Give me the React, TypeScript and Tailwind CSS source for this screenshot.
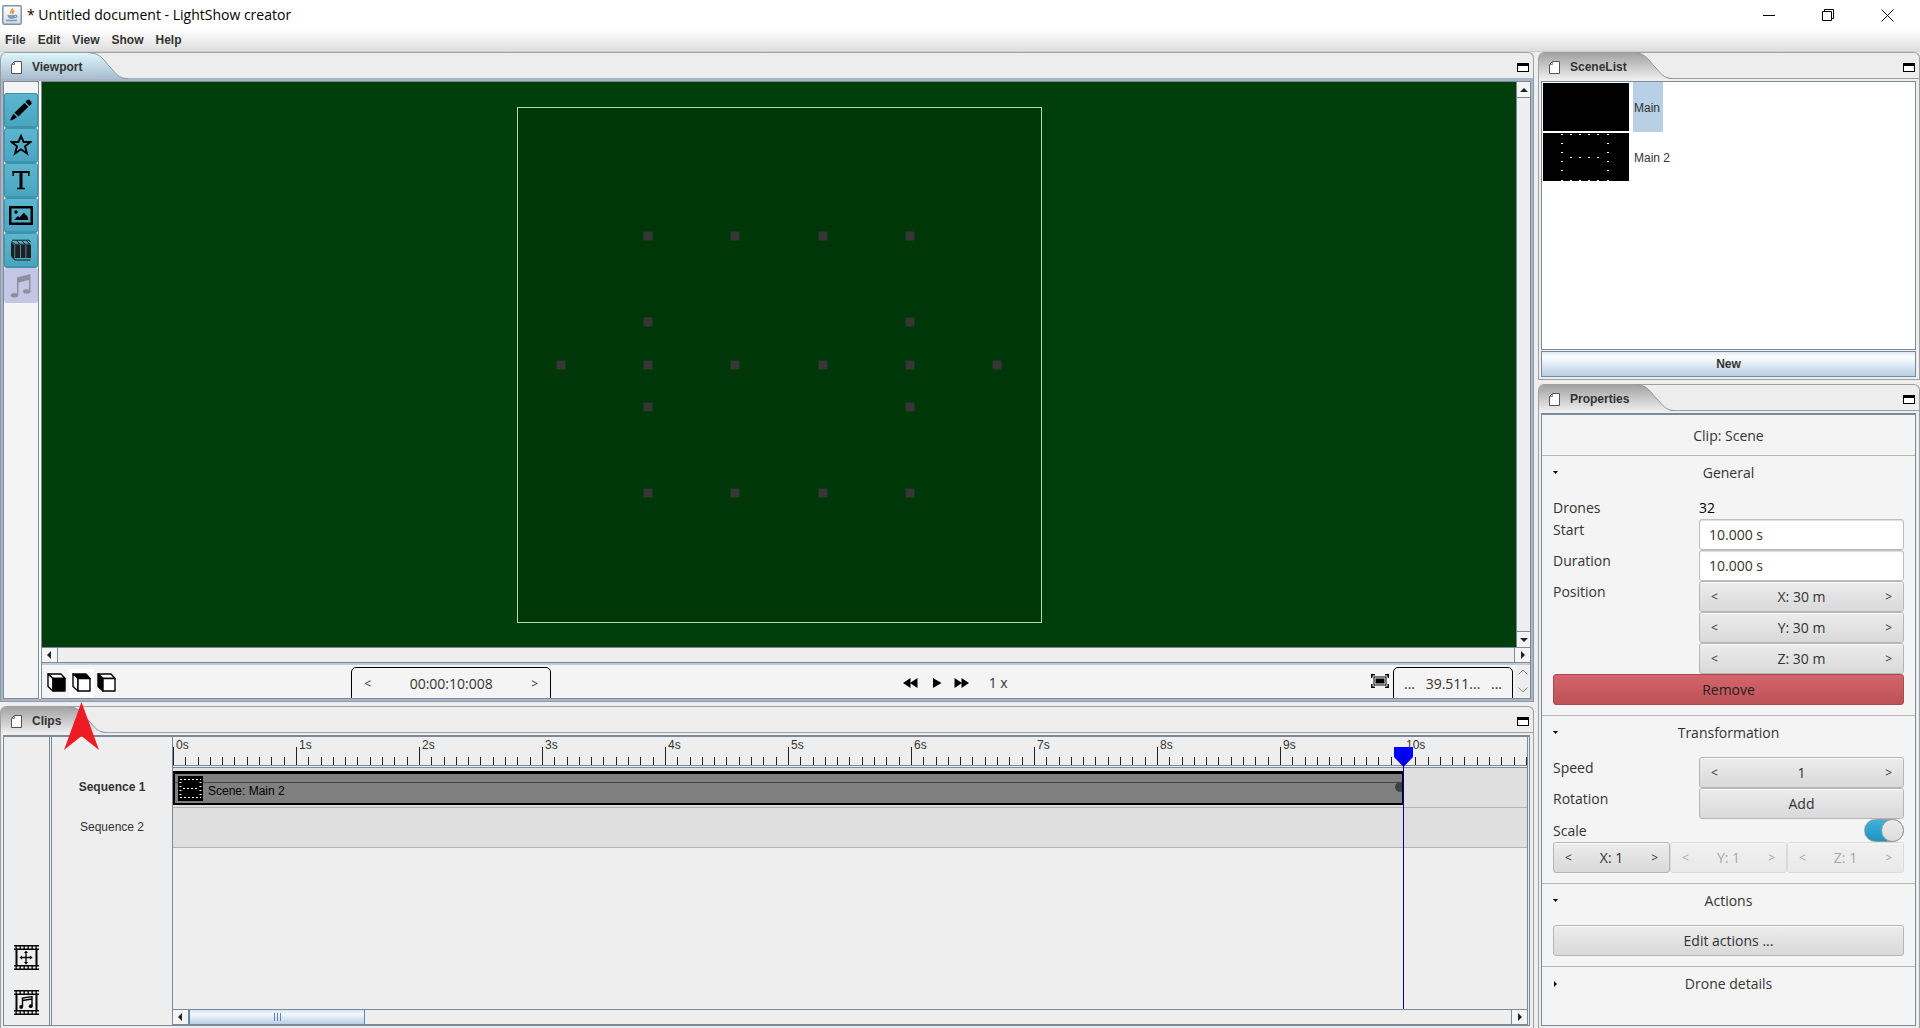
import React from "react";

const ARIAL = "font-['Liberation_Sans',Arial,sans-serif]";
const SEGOE = "font-['Open_Sans','Noto_Sans',sans-serif]";

/* ---------- icons ---------- */

function JavaIcon() {
  return (
    <svg width="20" height="20" viewBox="0 0 20 20" aria-hidden="true">
      <defs>
        <linearGradient id="java-bg" x1="0" y1="0" x2="0" y2="1">
          <stop offset="0" stopColor="#ffffff" />
          <stop offset="1" stopColor="#cfd8e2" />
        </linearGradient>
      </defs>
      <rect x="0.75" y="0.75" width="18.5" height="18.5" rx="1.5" fill="url(#java-bg)" stroke="#8492a5" strokeWidth="1.5" />
      <path d="M10 3.5c1.5 1.6-2.6 2.6-1 5.2M12.2 5.4c-1.8 1-1.8 1.8-1 3.4" fill="none" stroke="#e8883a" strokeWidth="1.5" />
      <path d="M5.500 10h7.500v2c0 1.200-1 1.800-2 1.800H8c-1.500-.8-2.500-1.800-2.500-3.800z" fill="#7e9bb8" />
      <path d="M13 10.500c2.500-.6 2.500 2.200-.5 2.200M4 15.500h11" fill="none" stroke="#7e9bb8" strokeWidth="1.300" />
    </svg>
  );
}

const PencilIcon = () => (
  <svg width="22" height="22" viewBox="0 0 22 22" aria-hidden="true">
    <path d="M17 1l2-.5L21.500 3v2l-2.300 2L15.500 3zM14.500 4l3.800 3.800L8.500 17.500 4.500 13.800zM3.600 14.800l3.400 3.400L2.500 21l-2.200.5.500-2.200z" />
  </svg>
);

const StarIcon = () => (
  <svg width="22" height="22" viewBox="0 0 22 22" aria-hidden="true">
    <path d="M11 2l2.600 6h6.800l-5.400 4.300 2 7.200-6-4.200-6 4.200 2-7.200L1.600 8h6.800z" fill="none" stroke="#000" strokeWidth="1.900" />
  </svg>
);

const TextIcon = () => (
  <svg width="22" height="22" viewBox="0 0 22 22" fill="none" stroke="#000" aria-hidden="true">
    <path d="M2.500 3h17" strokeWidth="2" />
    <path d="M3.250 2v5M18.750 2v5" strokeWidth="1.500" />
    <path d="M11 3v17" strokeWidth="3" />
    <path d="M7 19.500h8" strokeWidth="1.500" />
  </svg>
);

const ImageIcon = () => (
  <svg width="24" height="19" viewBox="0 0 24 19" aria-hidden="true">
    <rect x="1.250" y="1.250" width="21.500" height="16.500" fill="none" stroke="#000" strokeWidth="2.500" />
    <path d="M5 14l4-4 1.500 1.500L15 6.500l2 3 1 0 1.500 4.500z" />
    <circle cx="7" cy="6" r="1.700" />
  </svg>
);

const BooksIcon = () => (
  <svg width="20" height="22" viewBox="0 0 20 22" fill="#1d1f20" aria-hidden="true">
    <path d="M0 3l3.500 3v14L0 17zM4.200 6H9v13H4.200zM9.800 6h4.700v13H9.800zM15.300 6H20v13h-4.700z" />
    <path d="M.5 2.500L4 5.200h15.500M1 1.200h17l1.500 2M5.500 1.200l3.500 4M10.500 1.200l3.500 4M15.200 1.200l3.500 4M.5 18l3.500 3h15.500" fill="none" stroke="#1d1f20" />
  </svg>
);

const NoteIcon = () => (
  <svg width="22" height="25" viewBox="0 0 22 25" fill="#8f8f9c" aria-hidden="true">
    <path d="M7 4.500l13.500-3.500v18h-1.500V7L8.500 9.500V22H7z" />
    <ellipse cx="4.500" cy="22.200" rx="3.700" ry="2.200" />
    <ellipse cx="16.800" cy="18.500" rx="3.700" ry="2.200" />
  </svg>
);

function CubeIcon({ face }: { face: "front" | "top" | "left" }) {
  return (
    <svg width="19" height="19" viewBox="0 0 19 19" stroke="#000" strokeWidth="1.400" strokeLinejoin="round" aria-hidden="true">
      <path d="M1 1h13l4 4.500H6z" fill={face === "top" ? "#000" : "#fff"} />
      <path d="M1 1l5 4.500V18l-5-4.500z" fill={face === "left" ? "#000" : "#fff"} />
      <path d="M6 5.500h12V18H6z" fill={face === "front" ? "#000" : "#fff"} />
    </svg>
  );
}

function FilmIcon({ kind }: { kind: "move" | "music" }) {
  return (
    <svg width="25" height="25" viewBox="0 0 25 25" stroke="#000" fill="none" aria-hidden="true">
      <path d="M0 .75h25M0 4.250h25M0 20.750h25M0 24.250h25" strokeWidth="1.500" />
      <path d="M1.500 2.500h23M1.500 22.500h23" strokeWidth="3" strokeDasharray="1.300 2.700" />
      <path d="M2.500 4v17M22.500 4v17" strokeWidth="2" />
      {kind === "move" ? (
        <>
          <path d="M12 8v9M7.500 12.500h9" strokeWidth="1.300" />
          <path d="M12 5.500l2 2.500h-4zM12 19.500l2-2.500h-4zM5.500 12.500L8 10.500v4zM18.500 12.500L16 10.500v4z" fill="#000" stroke="none" />
        </>
      ) : (
        <>
          <path d="M8.500 17V8l9.500-1.500V16M8.500 10.500L18 9" strokeWidth="1.400" />
          <circle cx="7.200" cy="17" r="1.900" fill="#000" stroke="none" />
          <circle cx="16.700" cy="16.200" r="1.900" fill="#000" stroke="none" />
        </>
      )}
    </svg>
  );
}

const PageIcon = () => (
  <svg width="11" height="13" viewBox="0 0 11 13" aria-hidden="true">
    <path d="M3.500.5h7v12H.5v-9z" fill="#fff" stroke="#555" />
    <path d="M.5 3.500h3v-3" fill="none" stroke="#555" strokeWidth=".7" />
  </svg>
);

/* ---------- panel chrome ---------- */

function Tab({ title, active = false, id }: { title: string; active?: boolean; id: string }) {
  const top = active ? "#dcf6fb" : "#a2a2a2";
  const bottom = active ? "#a9bccf" : "#ededed";
  return (
    <div
      className={
        "flex h-[27px] shrink-0 items-start rounded-t-[6px] border-t border-r border-[#9f9fa3] " +
        (active ? "bg-[linear-gradient(#ededed_25px,#a5b3c5_25px)]" : "bg-[linear-gradient(#ededed_25px,#9aa0a6_25px,#9aa0a6_26px,#ededed_26px)]")
      }
    >
      <h2
        className={
          "flex h-[26px] items-center gap-[10px] rounded-tl-[6px] border-l border-[#9f9fa3] pt-[2px] pr-2 pl-[10px] text-xs font-bold text-[#333] " +
          (active ? "bg-linear-to-b from-[#dcf6fb] to-[#a9bccf]" : "bg-linear-to-b from-[#a2a2a2] to-[#ededed]")
        }
      >
        <PageIcon />
        {title}
      </h2>
      <svg width="38" height="26" viewBox="0 0 38 26" aria-hidden="true">
        <defs>
          <linearGradient id={id} x1="0" y1="0" x2="0" y2="1">
            <stop offset="0" stopColor={top} />
            <stop offset="1" stopColor={bottom} />
          </linearGradient>
        </defs>
        <path d="M0 0C11 0 14 8 20 14 26 20 28 26 38 26H0z" fill={`url(#${id})`} />
        <path d="M0 0C11 0 14 8 20 14 26 20 28 25.500 38 25.500" fill="none" stroke="#8f979f" />
      </svg>
      <button aria-label={`Maximize ${title}`} className="mt-[10px] mr-1 ml-auto h-[9px] w-3 border border-t-[3px] border-black bg-white" />
    </div>
  );
}

function Arrow({ dir }: { dir: "left" | "right" | "up" | "down" }) {
  const d = {
    left: "M6 1v8L2 5z",
    right: "M3 1v8l4-4z",
    up: "M1 7h8L5 3z",
    down: "M1 3h8L5 7z",
  }[dir];
  return (
    <svg width="10" height="10" viewBox="0 0 10 10" fill="#222" aria-hidden="true">
      <path d={d} />
    </svg>
  );
}

function ScrollBar({ vertical = false, thumb = false }: { vertical?: boolean; thumb?: boolean }) {
  const btn = "flex shrink-0 items-center justify-center bg-[#f4f4f4]";
  return (
    <div
      className={
        vertical
          ? "flex w-[14px] shrink-0 flex-col border-l border-[#7a8a99] bg-[#eeeeee]"
          : "flex h-[16px] shrink-0 border-y border-[#7a8a99] bg-[#eeeeee]"
      }
    >
      <button aria-label={vertical ? "Scroll up" : "Scroll left"} className={btn + (vertical ? " h-4 border-b border-[#7a8a99]" : " w-4 border-r border-[#7a8a99]")}>
        <Arrow dir={vertical ? "up" : "left"} />
      </button>
      {thumb && (
        <div className="flex w-[13%] items-center justify-center gap-[2px] border-x border-[#6382bf] bg-linear-to-b from-[#d5e3f1] via-[#f3f8fd] via-30% to-[#b8cfe5]">
          <i className="h-2 w-px bg-[#6382bf]" />
          <i className="h-2 w-px bg-[#6382bf]" />
          <i className="h-2 w-px bg-[#6382bf]" />
        </div>
      )}
      <div className="flex-1" />
      <button aria-label={vertical ? "Scroll down" : "Scroll right"} className={btn + (vertical ? " h-4 border-t border-[#7a8a99]" : " w-4 border-l border-[#7a8a99]")}>
        <Arrow dir={vertical ? "down" : "right"} />
      </button>
    </div>
  );
}

/* ---------- viewport ---------- */

const DRONES: [number, number][] = [
  [3, 3], [5, 3], [7, 3], [9, 3],
  [3, 5], [9, 5],
  [1, 6], [3, 6], [5, 6], [7, 6], [9, 6], [11, 6],
  [3, 7], [9, 7],
  [3, 9], [5, 9], [7, 9], [9, 9],
];

const TOOLS: [string, React.ReactNode][] = [
  ["Draw", <PencilIcon />],
  ["Shape", <StarIcon />],
  ["Text", <TextIcon />],
  ["Image", <ImageIcon />],
  ["Library", <BooksIcon />],
];

function Viewport() {
  return (
    <section className="flex min-h-0 flex-[650_1_0%] flex-col">
      <Tab title="Viewport" active id="tab-viewport" />
      <div className="flex min-h-0 flex-1 border-x border-b border-[#8f99a5] bg-[#a9b5c6] px-[2px] pt-[2px] pb-[2px]">
        <div className="flex min-w-0 flex-1 gap-[2px] bg-white">
          <div className="flex w-9 shrink-0 flex-col border border-[#7a8a99] bg-[#f4f4f4] pt-[11px]">
            {TOOLS.map(([name, icon]) => (
              <button
                key={name}
                aria-label={name}
                className="flex h-[35px] items-center justify-center rounded-[3px] border border-b-2 border-[#3c93ac] bg-linear-to-b from-[#5db6d0] to-[#49a5c0]"
              >
                {icon}
              </button>
            ))}
            <button aria-label="Music" disabled className="flex h-[35px] items-center justify-center rounded-[3px] bg-[#c3c6e4]">
              <NoteIcon />
            </button>
          </div>
          <div className="flex min-w-0 flex-1 flex-col border border-[#7a8a99]">
            <div className="flex min-h-0 flex-1">
              <div className="flex flex-1 items-center justify-center bg-[#003f0b]">
                <div className="relative h-[516px] w-[525px] border border-[#b4dcae] bg-[#003709]">
                  {DRONES.map(([x, y]) => (
                    <i
                      key={`${x}-${y}`}
                      className="absolute size-[9px] -translate-1/2 bg-[#363636]"
                      style={{ left: `${(x / 12) * 100}%`, top: `${(y / 12) * 100}%` }}
                    />
                  ))}
                </div>
              </div>
              <ScrollBar vertical />
            </div>
            <ScrollBar />
            <div className={"grid h-[35px] grid-cols-[309fr_551fr_468fr_159px] overflow-hidden border-t-2 border-[#c3cad1] bg-[#f4f4f4] text-sm text-[#333] " + SEGOE}>
              <div className="flex items-center pb-[3px] pl-[2px]">
                <button aria-label="Front view" className="flex h-7 w-[25px] items-center justify-center"><CubeIcon face="front" /></button>
                <button aria-label="Top view" className="flex h-7 w-[25px] items-center justify-center bg-white"><CubeIcon face="top" /></button>
                <button aria-label="Left view" className="flex h-7 w-[25px] items-center justify-center"><CubeIcon face="left" /></button>
              </div>
              <div className="mt-[2px] flex h-9 w-[200px] items-start rounded-[5px] border border-black px-3 pt-1">
                <button aria-label="Previous frame" className="text-xs leading-6">&lt;</button>
                <input aria-label="Time" defaultValue="00:00:10:008" className="min-w-0 flex-1 bg-transparent text-center leading-6" />
                <button aria-label="Next frame" className="text-xs leading-6">&gt;</button>
              </div>
              <div className="flex items-center gap-3 pb-[3px]">
                <button aria-label="Rewind"><svg width="15" height="10" viewBox="0 0 15 10"><path d="M7.500 0v10L0 5zM14.500 0v10L7 5z" /></svg></button>
                <button aria-label="Play" className="pl-[2px]"><svg width="10" height="10" viewBox="0 0 10 10"><path d="M1 0v10l8.500-5z" /></svg></button>
                <button aria-label="Fast forward"><svg width="15" height="10" viewBox="0 0 15 10"><path d="M.5 0v10L8 5zM7.500 0v10L15 5z" /></svg></button>
                <span className="pl-2">1 x</span>
              </div>
              <div className="flex items-start">
                <button aria-label="Fit to screen" className="flex h-8 w-[22px] items-center">
                  <svg width="18" height="14" viewBox="0 0 18 14" fill="none" stroke="#000" aria-hidden="true">
                    <path d="M4 .75H.75V4M14 .75h3.250V4M4 13.250H.75V10M14 13.250h3.250V10" strokeWidth="1.500" />
                    <rect x="3" y="3" width="12" height="8" strokeWidth="1" />
                    <rect x="5" y="5" width="8" height="4" fill="#000" strokeWidth="1" />
                  </svg>
                </button>
                <div className="mt-[2px] flex h-9 w-[120px] items-start rounded-[5px] border border-black px-[10px] pt-1">
                  <button aria-label="Zoom out" className="leading-6">...</button>
                  <input aria-label="Zoom" defaultValue="39.511..." className="min-w-0 flex-1 bg-transparent text-center leading-6" />
                  <button aria-label="Zoom in" className="leading-6">...</button>
                </div>
                <div className="ml-[2px] flex h-8 w-[15px] flex-col items-center justify-between bg-[#ededed] py-1">
                  <svg width="10" height="6" viewBox="0 0 10 6" fill="none" stroke="#888"><path d="M.5 5.500L5 1l4.500 4.500" /></svg>
                  <svg width="10" height="6" viewBox="0 0 10 6" fill="none" stroke="#888"><path d="M.5.5L5 5 9.500.5" /></svg>
                </div>
              </div>
            </div>
          </div>
        </div>
      </div>
    </section>
  );
}

/* ---------- clips ---------- */

function ClipThumb() {
  return (
    <svg width="25" height="25" viewBox="0 0 25 25" className="shrink-0 bg-black" stroke="#fff" strokeDasharray="2 2" aria-hidden="true">
      <path d="M2 3.500h21M5 12.500h15M2 21.500h21" />
      <path d="M2.500 6v14M22.500 6v14" strokeDasharray="1 3" strokeWidth="2" />
    </svg>
  );
}

function Clips() {
  return (
    <section className="relative flex min-h-0 flex-[322_1_0%] flex-col">
      <Tab title="Clips" id="tab-clips" />
      <svg className="absolute -top-1 left-16" width="35" height="48" viewBox="0 0 35 48" aria-hidden="true">
        <path d="M17.500 0L35 48 17.500 34 0 48z" fill="#ed1c24" />
      </svg>
      <div className="flex min-h-0 flex-1 border-x border-[#9f9fa3] pt-[2px] pr-[3px] pb-[2px] pl-[2px]">
        <div className="flex min-w-0 flex-1 border-x border-t-2 border-b border-[#7a8a99] pr-px">
          <div className="flex w-[46px] shrink-0 flex-col items-center justify-end gap-5 border-r border-[#7a8a99] pb-[10px]">
            <button aria-label="Add scene clip"><FilmIcon kind="move" /></button>
            <button aria-label="Add music clip"><FilmIcon kind="music" /></button>
          </div>
          <div className="ml-px flex w-[121px] shrink-0 flex-col border-l border-[#7a8a99] pt-[30px] text-center text-xs leading-10 text-[#333]">
            <b>Sequence 1</b>
            <span>Sequence 2</span>
          </div>
          <div className="flex min-w-0 flex-1 flex-col border-x border-[#7a8a99]">
            <div className="relative flex min-h-0 flex-1 flex-col overflow-hidden">
              <div className="flex h-[29px] shrink-0 border-b border-[#7a8a99] text-[#333]">
                {Array.from({ length: 11 }, (_, s) => (
                  <div key={s} className="relative flex w-[123px] shrink-0 items-end">
                    <span className="absolute top-0 left-[3px] text-xs leading-4">{s}s</span>
                    {Array.from({ length: 10 }, (_, t) => (
                      <i key={t} className={"flex-1 border-l border-[#222] " + (t === 0 ? "h-[18px]" : "h-2")} />
                    ))}
                  </div>
                ))}
                <i className="h-2 shrink-0 self-end border-l border-[#222]" />
              </div>
              <div className="mt-px flex h-[41px] shrink-0 items-center border-t border-b border-t-[#7a8a99] border-b-[#b3b3b3] bg-[#dfdfdf]">
                <div className="relative flex h-[34px] w-[1231px] shrink-0 items-center gap-[5px] overflow-hidden border-2 border-t-[3px] border-black bg-[#808080] pl-[3px] text-xs text-black">
                  <i className="absolute inset-x-0 top-2 border-t border-[#444]" />
                  <i className="absolute top-2 right-[-3px] size-[10px] rounded-full bg-[#404040]" />
                  <span className="relative"><ClipThumb /></span>
                  <span className="pt-[6px]">Scene: Main 2</span>
                </div>
              </div>
              <div className="h-10 shrink-0 border-b border-[#b3b3b3] bg-[#dfdfdf]" />
              <div className="absolute top-[10px] bottom-0 left-[1221px] flex w-[19px] flex-col items-center">
                <svg width="19" height="20" viewBox="0 0 19 20" className="shrink-0" aria-hidden="true">
                  <path d="M0 0h19v10l-9.500 10L0 10z" fill="#0000ff" />
                  <path d="M9.500 10v10" stroke="#000066" />
                </svg>
                <i className="w-px flex-1 bg-[#0000a8]" />
              </div>
            </div>
            <ScrollBar thumb />
          </div>
        </div>
      </div>
    </section>
  );
}

/* ---------- scene list ---------- */

function SceneDots() {
  return (
    <svg width="86" height="48" viewBox="0 0 86 48" className="bg-black" fill="#fff" aria-hidden="true">
      {[18, 27, 36, 45, 54, 64].map((x) => (
        <g key={x}>
          <rect x={x} y="1" width="2" height="1" />
          <rect x={x} y="47" width="2" height="1" />
          {x > 18 && x < 64 && <rect x={x} y="24" width="2" height="1" />}
        </g>
      ))}
      {[10, 19, 28, 37].map((y) => (
        <g key={y}>
          <rect x="18" y={y} width="2" height="1" />
          <rect x="64" y={y} width="2" height="1" />
        </g>
      ))}
    </svg>
  );
}

function SceneList() {
  return (
    <section className="flex min-h-0 flex-[328_1_0%] flex-col">
      <Tab title="SceneList" id="tab-scenes" />
      <div className="flex min-h-0 flex-1 flex-col gap-px border-x border-b border-[#9f9fa3] py-[2px] pr-[3px] pl-[2px]">
        <ul className="min-h-0 flex-1 border border-[#7a8a99] bg-white text-xs text-[#333]">
          <li className="flex h-[50px] items-center gap-1 pl-px">
            <svg width="86" height="48" className="bg-black" aria-hidden="true" />
            <span className="flex h-full w-[30px] items-center bg-[#b8cfe5] pt-[2px] pl-px">Main</span>
          </li>
          <li className="flex h-[50px] items-center gap-1 pl-px">
            <SceneDots />
            <span className="pt-[2px] pl-px">Main 2</span>
          </li>
        </ul>
        <button className="h-[26px] shrink-0 border border-[#7a8a99] bg-linear-to-b from-[#dfe9f3] via-[#fbfdff] via-20% to-[#b8cfe5] text-xs font-bold text-[#333]">New</button>
      </div>
    </section>
  );
}

/* ---------- properties ---------- */

const raised = "rounded-[3px] border border-[#b5b5b5] bg-linear-to-b from-[#ececec] to-[#d9d9d9] shadow-[inset_0_1px_0_#fafafa]";

function Spinner({ label, value, disabled = false }: { label: string; value: string; disabled?: boolean }) {
  return (
    <div className={"flex h-[31px] min-w-0 items-center px-[11px] " + raised + (disabled ? " opacity-40" : "")}>
      <button aria-label={`Decrease ${label}`} disabled={disabled} className="text-xs">&lt;</button>
      <input aria-label={label} defaultValue={value} disabled={disabled} className="w-0 min-w-0 flex-1 bg-transparent text-center" />
      <button aria-label={`Increase ${label}`} disabled={disabled} className="text-xs">&gt;</button>
    </div>
  );
}

function Row({ label, htmlFor, children }: { label: string; htmlFor?: string; children: React.ReactNode }) {
  return (
    <div className="grid grid-cols-[146fr_205fr]">
      <label htmlFor={htmlFor} className="leading-[22px]">{label}</label>
      <div className="flex min-w-0 flex-col">{children}</div>
    </div>
  );
}

function Section({ title, open = true, children }: { title: string; open?: boolean; children?: React.ReactNode }) {
  return (
    <div className="border-t border-[#b5b5b5] px-[11px]">
      <button aria-expanded={open} className="flex h-[33px] w-full items-center">
        <svg width="6" height="6" viewBox="0 0 6 6" aria-hidden="true">
          <path d={open ? "M0 1h5L2.500 4z" : "M1 0v6l3-3z"} />
        </svg>
        <span className="flex-1 pr-[6px] text-center">{title}</span>
      </button>
      {children && <div className="flex flex-col pt-2 pb-[10px]">{children}</div>}
    </div>
  );
}

const field = "h-[31px] rounded-[3px] border border-[#bdbdbd] bg-white px-[9px] shadow-[inset_0_1px_1px_#ddd]";

function Properties() {
  return (
    <section className="flex min-h-0 flex-[644_1_0%] flex-col">
      <Tab title="Properties" id="tab-properties" />
      <div className="flex min-h-0 flex-1 border-x border-[#9f9fa3] py-[2px] pr-[3px] pl-[2px]">
        <div className={"min-w-0 flex-1 overflow-hidden border border-t-2 border-[#7a8a99] bg-[#f4f4f4] text-sm text-[#333] " + SEGOE}>
          <h3 className="h-10 text-center leading-[41px]">Clip: Scene</h3>
          <Section title="General">
            <Row label="Drones"><span className="leading-[22px] text-black">32</span></Row>
            <Row label="Start" htmlFor="start"><input id="start" defaultValue="10.000 s" className={field} /></Row>
            <Row label="Duration" htmlFor="duration"><input id="duration" defaultValue="10.000 s" className={field} /></Row>
            <Row label="Position">
              <Spinner label="Position X" value="X: 30 m" />
              <Spinner label="Position Y" value="Y: 30 m" />
              <Spinner label="Position Z" value="Z: 30 m" />
            </Row>
            <button className="h-[31px] rounded-[3px] border border-[#a84a50] bg-linear-to-b from-[#d4646b] to-[#bd5258] text-[#222]">Remove</button>
          </Section>
          <Section title="Transformation">
            <Row label="Speed"><Spinner label="Speed" value="1" /></Row>
            <Row label="Rotation"><button className={"h-[31px] " + raised}>Add</button></Row>
            <div className="flex h-[23px] items-center justify-between">
              <label htmlFor="scale">Scale</label>
              <span className="relative flex h-[23px] w-10">
                <input id="scale" type="checkbox" role="switch" defaultChecked className="size-full appearance-none rounded-full border border-[#9a9a9a] bg-linear-to-b from-[#3fb0d8] to-[#1795c2]" />
                <i className="pointer-events-none absolute top-0 right-0 size-[23px] rounded-full border border-[#9a9a9a] bg-linear-to-b from-[#eaeaea] to-[#dcdcdc]" />
              </span>
            </div>
            <div className="grid grid-cols-3">
              <Spinner label="Scale X" value="X: 1" />
              <Spinner label="Scale Y" value="Y: 1" disabled />
              <Spinner label="Scale Z" value="Z: 1" disabled />
            </div>
          </Section>
          <Section title="Actions">
            <button className={"h-[31px] " + raised}>Edit actions ...</button>
          </Section>
          <Section title="Drone details" open={false} />
        </div>
      </div>
    </section>
  );
}

/* ---------- window ---------- */

export default function App() {
  return (
    <div className={"flex h-screen flex-col overflow-hidden bg-[#eeeeee] " + ARIAL}>
      <header className="flex h-[30px] shrink-0 items-center bg-white pl-[2px]">
        <JavaIcon />
        <h1 className={"pl-[5px] text-sm text-black " + SEGOE}>* Untitled document - LightShow creator</h1>
        <div className="ml-auto flex items-center gap-[46px] pr-[26px]">
          <button aria-label="Minimize"><svg width="13" height="13" viewBox="0 0 13 13" stroke="#000"><path d="M0 6.500h12" /></svg></button>
          <button aria-label="Restore">
            <svg width="13" height="13" viewBox="0 0 13 13" fill="none" stroke="#000"><path d="M.5 2.500h9v9h-9zM2.500 2.500v-2h9v9h-2" /></svg>
          </button>
          <button aria-label="Close"><svg width="13" height="13" viewBox="0 0 13 13" stroke="#000"><path d="M.5.5l12 12M12.500.5l-12 12" /></svg></button>
        </div>
      </header>
      <nav className="flex h-[22px] shrink-0 items-start gap-3 border-b border-[#cfcfcf] bg-linear-to-b from-white to-[#dddddd] pl-[5px] text-xs leading-5 font-bold text-[#333]">
        {["File", "Edit", "View", "Show", "Help"].map((m) => (
          <button key={m}>{m}</button>
        ))}
      </nav>
      <main className="flex min-h-0 flex-1 gap-1">
        <div className="flex min-w-0 flex-1 flex-col gap-1">
          <Viewport />
          <Clips />
        </div>
        <div className="flex w-[382px] shrink-0 flex-col gap-1">
          <SceneList />
          <Properties />
        </div>
      </main>
    </div>
  );
}
